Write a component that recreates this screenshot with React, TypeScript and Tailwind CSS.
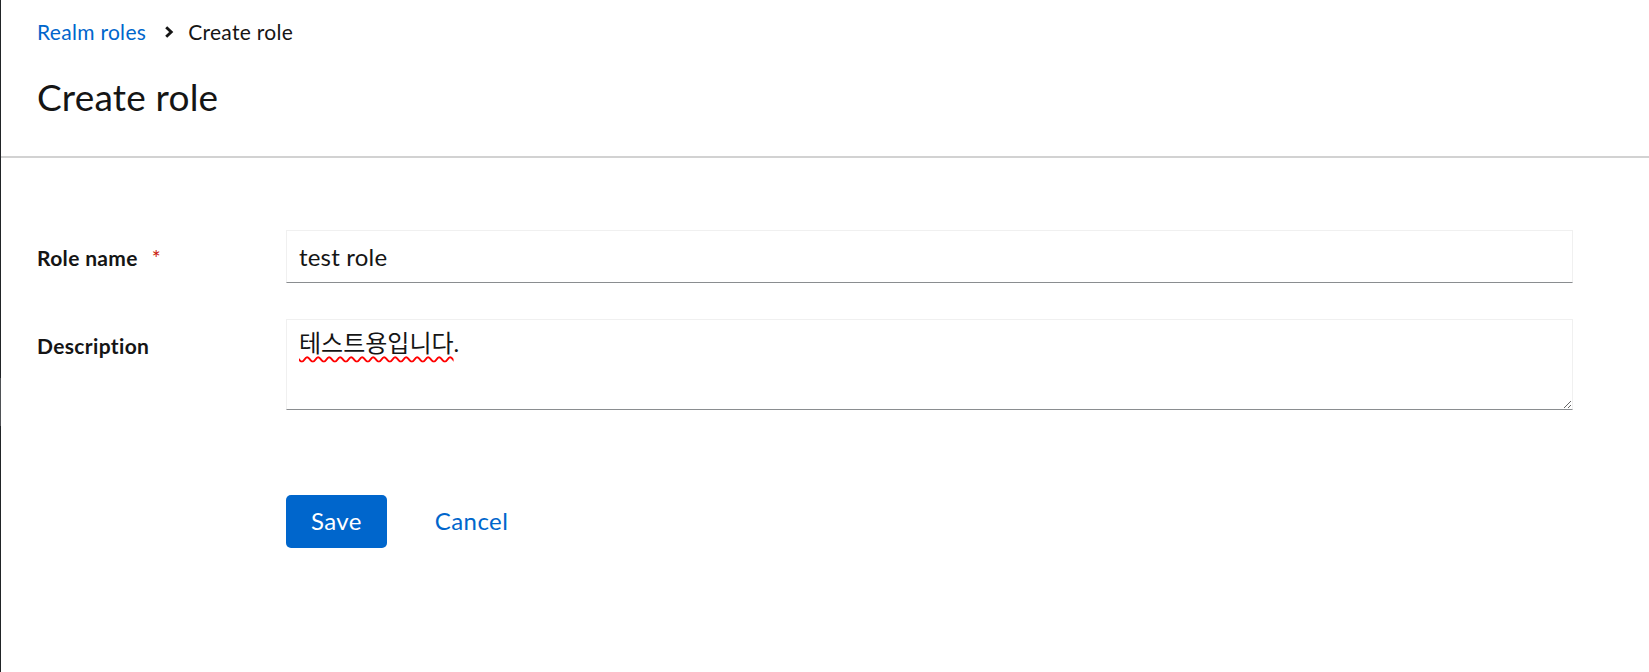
import React from 'react';

const font = { fontFamily: 'Lato, "Noto Sans CJK KR", sans-serif' };

function Chevron() {
  return (
    <svg width="10" height="12" viewBox="0 0 10 12" className="ml-[18px] mr-[14px] shrink-0">
      <path d="M2.2 1.2 L7.2 6 L2.2 10.8" fill="none" stroke="#151515" strokeWidth="2.9" strokeLinejoin="miter" />
    </svg>
  );
}

export default function App() {
  return (
    <div className="flex min-h-[672px] bg-white text-[#151515]" style={font}>
      {/* sidebar edge */}
      <div className="flex w-px shrink-0 flex-col">
        <div className="h-[378px] bg-[#212427]" />
        <div className="h-[48px] bg-[#4f5256]" />
        <div className="flex-1 bg-[#212427]" />
      </div>

      <div className="flex min-w-0 flex-1 flex-col">
        {/* ── Header ─────────────────────────────────────── */}
        <div className="border-b-2 border-[#d2d2d2] pl-[36px] pt-[16px] pb-[37px]">
          <nav className="flex items-center text-[21px] leading-[31.5px] tracking-[0.3px]">
            <a href="#" className="text-[#0066cc]">Realm roles</a>
            <Chevron />
            <span>Create role</span>
          </nav>
          <h1 className="mt-[27px] text-[37px] leading-[44px] font-normal tracking-[0.2px]">Create role</h1>
        </div>

        {/* ── Form ───────────────────────────────────────── */}
        <form className="pl-[36px] pt-[72px]" onSubmit={(e) => e.preventDefault()}>
          <div className="grid w-[1536px] grid-cols-[225px_1fr] gap-x-[24px] gap-y-[36px]">
            <label htmlFor="role-name" className="pt-[10px] text-[21px] leading-[36px] font-bold tracking-[0.35px]">
              Role name<span className="ml-[14px] font-normal text-[#c9190b]">*</span>
            </label>
            <input
              id="role-name"
              defaultValue="test role"
              className="h-[53px] border border-[#f0f0f0] border-b-[#8a8d90] px-[12px] text-[24px] leading-[36px] tracking-[0.2px] outline-none"
              style={font}
            />

            <label htmlFor="description" className="pt-[9px] text-[21px] leading-[36px] font-bold tracking-[0.35px]">
              Description
            </label>
            <div className="relative">
              <textarea
                id="description"
                defaultValue="테스트용입니다."
                spellCheck={false}
                className="block h-[91px] w-full border border-[#f0f0f0] border-b-[#8a8d90] px-[12px] pt-[5px] text-[24px] leading-[36px] outline-none"
                style={font}
              />
              <div
                aria-hidden
                className="pointer-events-none absolute inset-0 border border-transparent px-[12px] pt-[5px] text-[24px] leading-[36px] text-transparent"
                style={font}
              >
                <span className="underline decoration-wavy decoration-[#ff0000] decoration-[1.6px] underline-offset-[4px]">테스트용입니다</span>
              </div>
            </div>

            <div />
            <div className="mt-[49px] flex items-center gap-[24px]">
              <button type="submit" className="h-[53px] rounded-[5px] bg-[#0066cc] px-[25px] text-[24px] leading-[36px] tracking-[0.4px] text-white">
                Save
              </button>
              <button type="button" className="h-[53px] px-[24px] text-[24px] leading-[36px] tracking-[0.4px] text-[#0066cc]">
                Cancel
              </button>
            </div>
          </div>
        </form>
      </div>
    </div>
  );
}
